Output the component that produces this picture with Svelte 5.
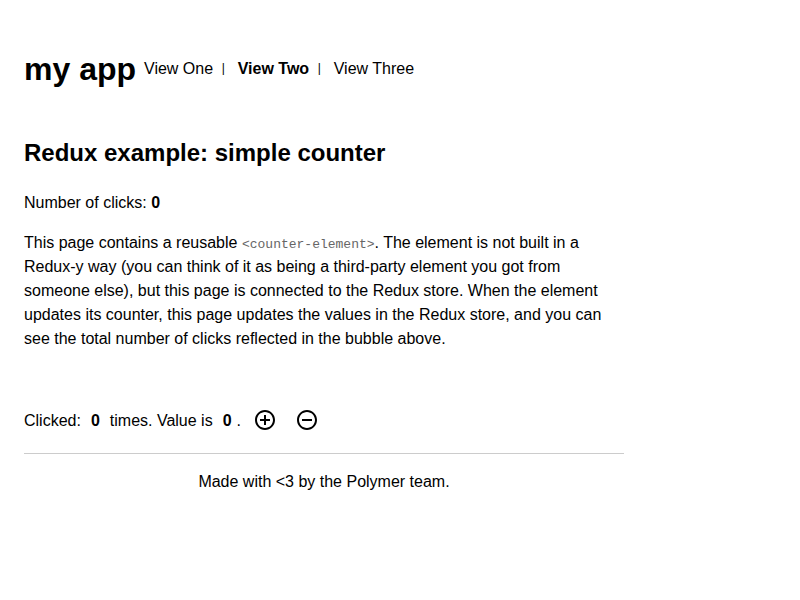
<script>
  let clicks = $state(0);
  let value = $state(0);

  function increment() {
    clicks += 1;
    value += 1;
  }

  function decrement() {
    clicks += 1;
    value -= 1;
  }
</script>

<div class="app">
  <header>
    <h1>my app</h1>
    <nav>
      <a href="#one">View One</a><span class="bar">|</span>
      <a class="selected" href="#two">View Two</a><span class="bar">|</span>
      <a href="#three">View Three</a>
    </nav>
  </header>

  <main>
    <h2>Redux example: simple counter</h2>
    <p class="clicks">Number of clicks: <b>{clicks}</b></p>
    <p class="description">
      This page contains a reusable <code>&lt;counter-element&gt;</code>. The element is not built in a<br />
      Redux-y way (you can think of it as being a third-party element you got from<br />
      someone else), but this page is connected to the Redux store. When the element<br />
      updates its counter, this page updates the values in the Redux store, and you can<br />
      see the total number of clicks reflected in the bubble above.
    </p>
    <div class="counter">
      <div class="status">
        <span>Clicked:</span><b class="count">{clicks}</b><span>times. Value is</span><b class="value">{value}</b><span>.</span>
      </div>
      <button class="plus" onclick={increment} aria-label="Add 1">
        <svg width="24" height="24" viewBox="0 0 24 24"><path d="M13 7h-2v4H7v2h4v4h2v-4h4v-2h-4V7zm-1-5C6.48 2 2 6.48 2 12s4.48 10 10 10 10-4.48 10-10S17.52 2 12 2zm0 18c-4.41 0-8-3.59-8-8s3.59-8 8-8 8 3.59 8 8-3.59 8-8 8z" /></svg>
      </button>
      <button class="minus" onclick={decrement} aria-label="Remove 1">
        <svg width="24" height="24" viewBox="0 0 24 24"><path d="M7 11v2h10v-2H7zm5-9C6.48 2 2 6.48 2 12s4.48 10 10 10 10-4.48 10-10S17.52 2 12 2zm0 18c-4.41 0-8-3.59-8-8s3.59-8 8-8 8 3.59 8 8-3.59 8-8 8z" /></svg>
      </button>
    </div>
  </main>

  <footer>Made with &lt;3 by the Polymer team.</footer>
</div>

<style>
  :global(body) {
    margin: 0;
    background: #fff;
  }

  .app {
    width: 600px;
    padding: 45px 24px 0;
    color: #000;
    font: 16px/24px "Liberation Sans", Arial, sans-serif;
    white-space: nowrap;
  }

  header {
    display: flex;
    align-items: center;
    height: 48px;
  }

  h1 {
    margin: 0 8px 0 0;
    font-size: 32px;
    line-height: 48px;
  }

  nav {
    display: flex;
    height: 24px;
  }

  a {
    color: inherit;
    text-decoration: none;
  }

  .selected {
    font-weight: bold;
  }

  .bar {
    width: 3px;
    margin: 0 13px 0 8.6px;
    font-size: 12px;
    line-height: 22px;
  }

  h2 {
    margin: 42px 0 0;
    font-size: 24px;
    line-height: 36px;
  }

  p {
    margin: 16px 0 0;
  }

  .clicks {
    margin-top: 20px;
  }

  code {
    color: #666;
    font: 13px/20px "Liberation Mono", "Courier New", monospace;
  }

  .counter {
    display: flex;
    align-items: center;
    height: 24px;
    margin-top: 57px;
  }

  .status {
    display: flex;
    padding-top: 2px;
  }

  .count {
    margin: 0 10px;
  }

  .value {
    margin: 0 5px 0 10px;
  }

  button {
    display: flex;
    padding: 0;
    border: 0;
    background: none;
    cursor: pointer;
  }

  .plus {
    margin-left: 12px;
  }

  .minus {
    margin-left: 18px;
  }

  footer {
    margin-top: 21px;
    padding-top: 16px;
    border-top: 1px solid #ccc;
    text-align: center;
  }
</style>
